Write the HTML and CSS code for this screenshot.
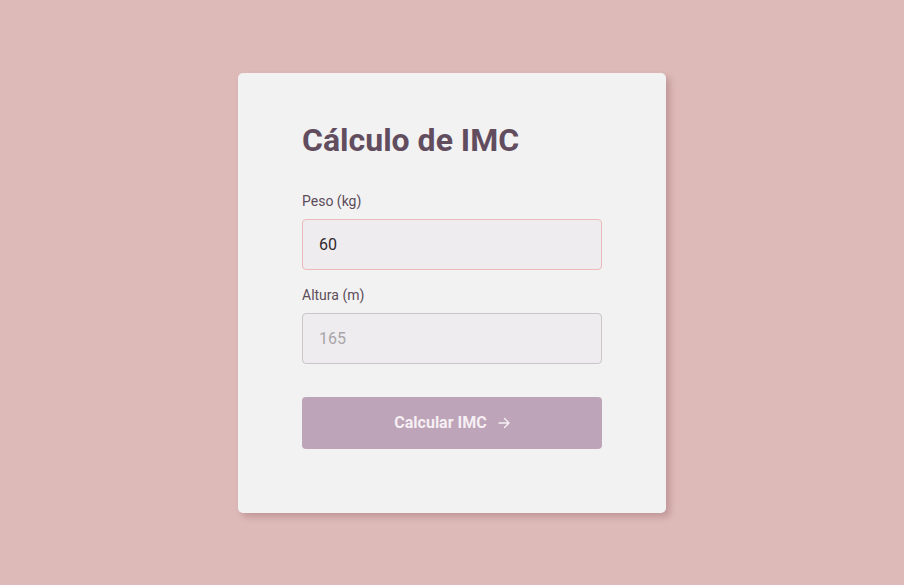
FILE: index.html
```html
<!DOCTYPE html>
<html lang="pt">
<head>
<meta charset="utf-8">
<title>Cálculo de IMC</title>
<link rel="stylesheet" href="styles.css">
</head>
<body>
<main class="page">
  <form class="card">
    <h1 class="title">Cálculo de IMC</h1>
    <label class="field">
      <span class="label">Peso (kg)</span>
      <input class="input input--active" type="text" value="60">
    </label>
    <label class="field">
      <span class="label">Altura (m)</span>
      <input class="input" type="text" placeholder="165">
    </label>
    <button class="button" type="button">
      <span>Calcular IMC</span>
      <svg class="arrow" width="12" height="12" viewBox="0 0 12 12" aria-hidden="true">
        <path d="M1 6h10M6.5 1.5L11 6l-4.5 4.5" fill="none" stroke="currentColor" stroke-width="1.4" stroke-linecap="round" stroke-linejoin="round"/>
      </svg>
    </button>
  </form>
</main>
</body>
</html>
```

FILE: styles.css
```css
* { box-sizing: border-box; }

html, body {
  margin: 0;
  height: 100%;
}

body {
  background: #ddb9b8;
  font-family: Roboto, "Liberation Sans", sans-serif;
}

.page {
  min-height: 100vh;
  display: flex;
  align-items: center;
  justify-content: center;
}

.card {
  width: 428px;
  background: #f2f2f2;
  border-radius: 5px;
  padding: 49px 64px 64px 64px;
  box-shadow: 4px 4px 6px rgba(120, 70, 70, 0.28);
  display: flex;
  flex-direction: column;
}

.title {
  margin: 0 0 34px;
  font-size: 32px;
  font-weight: 700;
  color: #624d5f;
  line-height: 37px;
}

.field {
  display: flex;
  flex-direction: column;
  margin-bottom: 17px;
}

.label {
  font-size: 14px;
  line-height: 16px;
  color: #5d4c5a;
  margin-bottom: 10px;
}

.input {
  height: 51px;
  width: 100%;
  border: 1px solid #c9c5c9;
  border-radius: 4px;
  background: #eeecee;
  padding: 0 16px;
  font-family: inherit;
  font-size: 16px;
  color: #2e2a2e;
  outline: none;
}

.input::placeholder {
  color: #a9a5a9;
}

.input--active {
  border-color: #ebb8b8;
}

.button {
  margin-top: 16px;
  height: 52px;
  border: none;
  border-radius: 4px;
  background: #bda4b8;
  color: #f6eff4;
  font-family: inherit;
  font-size: 16px;
  font-weight: 700;
  display: flex;
  align-items: center;
  justify-content: center;
  gap: 11px;
  cursor: pointer;
}

.arrow {
  display: block;
}
```
